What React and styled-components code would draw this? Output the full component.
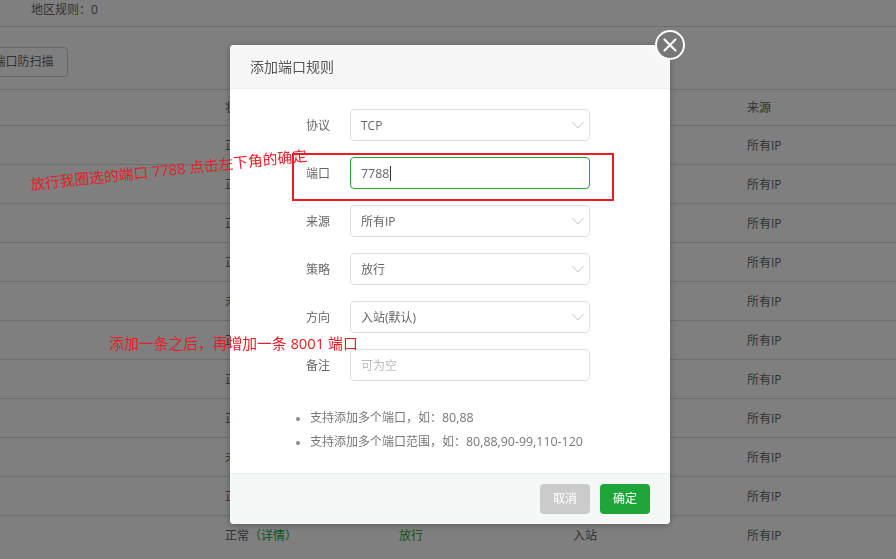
import React from "react"
import styled, { createGlobalStyle } from "styled-components"

const FONT = `"Open Sans", "Noto Sans CJK SC", "Noto Sans", sans-serif`
const GREEN = "#20a53a"
const RED = "#ed1c24"

const GlobalStyle = createGlobalStyle`
  html, body {
    margin: 0;
    height: 100%;
    overflow: hidden;
    background: #fff;
    font-family: ${FONT};
    font-size: 12px;
    color: #666;
  }
`

// Page behind the dialog
const Page = styled.div`
  width: 896px;
  height: 559px;
  overflow: hidden;
`

const RuleSummary = styled.div`
  height: 27px;
  box-sizing: border-box;
  padding-left: 31px;
  line-height: 20px;
  border-bottom: 1px solid #ddd;
`

const Toolbar = styled.div`
  height: 62px;
  box-sizing: border-box;
  padding-top: 20px;
  margin-left: -21px;
`

const ToolButton = styled.div`
  width: 89px;
  height: 30px;
  box-sizing: border-box;
  border: 1px solid #ccc;
  border-radius: 4px;
  line-height: 28px;
  text-align: center;
  font-size: 12px;
`

const Row = styled.div`
  display: grid;
  grid-template-columns: repeat(4, 174px);
  padding-left: 225px;
  height: ${props => (props.$head ? "35px" : "38px")};
  line-height: ${props => (props.$head ? "35px" : "40px")};
  border-top: 1px solid #ddd;
`

const Allow = styled.span`
  color: ${GREEN};
`

// Dialog
const Overlay = styled.div`
  position: fixed;
  inset: 0;
  box-sizing: border-box;
  padding: 45px 0 0 230px;
  background: rgba(0, 0, 0, 0.5);
`

const Modal = styled.div`
  position: relative;
  width: 440px;
  height: 479px;
  display: flex;
  flex-direction: column;
  background: #fff;
  border-radius: 4px;
  box-shadow: 0 1px 6px rgba(0, 0, 0, 0.3);
`

const Close = styled.div`
  position: absolute;
  top: -15px;
  right: -15px;
  width: 30px;
  height: 30px;
  box-sizing: border-box;
  display: flex;
  align-items: center;
  justify-content: center;
  border: 2.5px solid #fff;
  border-radius: 50%;
  background: #777;
`

const ModalTitle = styled.div`
  height: 43px;
  flex: none;
  padding-left: 20px;
  line-height: 43px;
  font-size: 14px;
  color: #555;
  background: #f7f7f7;
  border-bottom: 1px solid #eee;
  border-radius: 4px 4px 0 0;
`

const Form = styled.div`
  flex: 1;
  display: flex;
  flex-direction: column;
  gap: 16px;
  padding-top: 20px;
`

const Field = styled.div`
  display: flex;
  align-items: center;
  height: 32px;
`

const Label = styled.div`
  width: 100px;
  margin-right: 20px;
  text-align: right;
  color: #666;
`

const Control = styled.div`
  position: relative;
  width: 240px;
  height: 32px;
  box-sizing: border-box;
  display: flex;
  align-items: center;
  padding: 0 10px;
  border: 1px solid ${props => (props.$active ? GREEN : "#dcdfe6")};
  border-radius: 4px;
  color: ${props => (props.$placeholder ? "#bbb" : "#666")};
`

const Caret = styled.span`
  width: 1px;
  height: 15px;
  margin-left: 1px;
  background: #333;
`

const Chevron = styled.svg`
  position: absolute;
  right: 5px;
  top: 11px;
`

const Tips = styled.ul`
  margin: 9px 0 0;
  padding: 0 0 0 80px;
  color: #777;
  line-height: 24px;

  li::marker {
    color: #888;
    font-size: 10px;
  }
`

const Num = styled.span`
  font-size: 12.4px;
`

const Footer = styled.div`
  height: 50px;
  flex: none;
  display: flex;
  justify-content: flex-end;
  align-items: center;
  gap: 10px;
  padding-right: 20px;
  background: #f6f8f8;
  border-top: 1px solid #eee;
  border-radius: 0 0 4px 4px;
`

const FooterButton = styled.div`
  width: 50px;
  height: 30px;
  line-height: 30px;
  text-align: center;
  color: #fff;
  border-radius: 4px;
  background: ${props => (props.$primary ? GREEN : "#cbcbcb")};
`

// Red notes drawn over the screenshot
const Note = styled.div`
  position: fixed;
  left: ${props => props.$x}px;
  top: ${props => props.$y}px;
  white-space: nowrap;
  font-size: 14.8px;
  line-height: 20px;
  color: ${RED};
  transform: rotate(${props => props.$tilt || 0}deg);
  transform-origin: left center;
`

const Marker = styled.div`
  position: fixed;
  left: 292px;
  top: 153px;
  width: 322px;
  height: 48px;
  box-sizing: border-box;
  border: 2px solid ${RED};
`

const rows = [
  "正常", "正常", "正常", "正常", "未生效", "正常", "正常", "正常", "未生效", "正常", "正常"
]

const selects = [
  { label: "协议", value: "TCP" }
]

const lowerSelects = [
  { label: "来源", value: "所有IP" },
  { label: "策略", value: "放行" },
  { label: "方向", value: "入站(默认)" }
]

const SelectField = ({ label, value }) => (
  <Field>
    <Label>{label}</Label>
    <Control>
      {value}
      <Chevron width="12" height="8" viewBox="0 0 12 8" fill="none" stroke="#c4c7cc" strokeWidth="1">
        <path d="M.5 1l5.5 6 5.5-6" />
      </Chevron>
    </Control>
  </Field>
)

const App = () => (
  <>
    <GlobalStyle />
    <Page>
      <RuleSummary>地区规则：0</RuleSummary>
      <Toolbar>
        <ToolButton>端口防扫描</ToolButton>
      </Toolbar>
      <Row $head>
        <span>状态</span>
        <span>策略</span>
        <span>方向</span>
        <span>来源</span>
      </Row>
      {rows.map((status, i) => (
        <Row key={i}>
          <span>{status}<Allow>（详情）</Allow></span>
          <Allow>放行</Allow>
          <span>入站</span>
          <span>所有IP</span>
        </Row>
      ))}
    </Page>

    <Overlay>
      <Modal>
        <Close>
          <svg width="16" height="16" viewBox="0 0 16 16" stroke="#fff" strokeWidth="2.2" strokeLinecap="round">
            <path d="M2.5 2.5l11 11M13.5 2.5l-11 11" />
          </svg>
        </Close>
        <ModalTitle>添加端口规则</ModalTitle>
        <Form>
          {selects.map(s => <SelectField key={s.label} {...s} />)}
          <Field>
            <Label>端口</Label>
            <Control $active><Num>7788</Num><Caret /></Control>
          </Field>
          {lowerSelects.map(s => <SelectField key={s.label} {...s} />)}
          <Field>
            <Label>备注</Label>
            <Control $placeholder>可为空</Control>
          </Field>
          <Tips>
            <li>支持添加多个端口，如：<Num>80,88</Num></li>
            <li>支持添加多个端口范围，如：<Num>80,88,90-99,110-120</Num></li>
          </Tips>
        </Form>
        <Footer>
          <FooterButton>取消</FooterButton>
          <FooterButton $primary>确定</FooterButton>
        </Footer>
      </Modal>
    </Overlay>

    <Marker />
    <Note $x={30} $y={174} $tilt={-6}>放行我圈选的端口 7788 点击左下角的确定</Note>
    <Note $x={109} $y={333}>添加一条之后，再增加一条 8001 端口</Note>
  </>
)

export default App
